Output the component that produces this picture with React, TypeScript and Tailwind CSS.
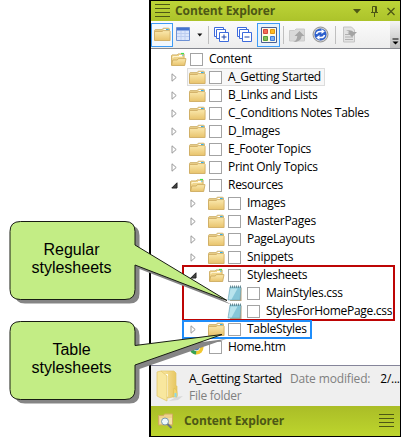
import React from "react";

function Folder({ open = false }: { open?: boolean }) {
  return (
    <svg width="17" height="15" viewBox="0 0 17 15" className="shrink-0">
      <defs>
        <linearGradient id="fold" x1="0" y1="0" x2="0" y2="1">
          <stop offset="0" stopColor="#fbe9ae" />
          <stop offset="1" stopColor="#e8c36c" />
        </linearGradient>
      </defs>
      {open ? (
        <>
          <path d="M1.500 13V3.500l.6-.6h5l1-1h6v5" fill="#f0d58c" stroke="#c9a656" strokeWidth=".8" />
          <path d="M9 3.500h4" stroke="#fff" strokeWidth="1.200" />
          <path d="M11 1.500h3" stroke="#3ee04a" strokeWidth="1.200" />
          <path d="M12 3.200h1.500" stroke="#46bdea" strokeWidth="1" />
          <path d="M3 6V4.500h9" fill="none" stroke="#fdf3cf" />
          <path d="M1.500 13.500 2.800 8h4.500l1-1.400H16L14.700 13.500Z" fill="url(#fold)" stroke="#c9a656" strokeWidth=".8" />
        </>
      ) : (
        <>
          <path d="M.5 13V3.200l.7-.7h7l1-1.300h5.600l.7.700V13Z" fill="#e6cb85" stroke="#cdb06a" strokeWidth=".8" />
          <path d="M9.500 2.700h5" stroke="#fff" strokeWidth="1.400" />
          <path d="M12 2.700h2.700" stroke="#36aee8" strokeWidth="1.400" />
          <path d="M.5 13.500V4.500h7.600l1.200-.9h6.200l.6.600v9.300Z" fill="url(#fold)" stroke="#cdaa60" strokeWidth=".8" />
        </>
      )}
    </svg>
  );
}

function Notepad() {
  return (
    <svg width="16" height="17" viewBox="0 0 16 17" className="shrink-0">
      <path d="M5 3h9.500v13H3Z" fill="#b9a27b" />
      <path d="M3 2h11l-1 13H1Z" fill="#86c6d8" stroke="#6ba3b5" strokeWidth=".6" />
      <path d="M3.500 3.500h7l-6 11H1.500Z" fill="#c6ebf2" opacity=".8" />
      <path d="M3.500.5v2.500M5.500.5v2.500M7.500.5v2.500M9.500.5v2.500M11.500.5v2.500M13.500.5v2.500" stroke="#5d848f" strokeWidth=".9" />
    </svg>
  );
}

function Chrome() {
  return (
    <svg width="15" height="15" viewBox="0 0 15 15" className="shrink-0">
      <circle cx="7.500" cy="7.500" r="7" fill="#f2c830" />
      <path d="M7.500 7.500 1.400 4A7 7 0 0 1 13.600 4Z" fill="#d53e32" />
      <path d="M7.500 7.500 1.400 4A7 7 0 0 0 7 14.500Z" fill="#33a254" />
      <circle cx="7.500" cy="7.500" r="3.500" fill="#eef4f8" />
      <circle cx="7.500" cy="7.500" r="2.700" fill="#3678c4" />
    </svg>
  );
}

type Item = {
  label: string;
  pad: string;
  icon: "closed" | "open" | "css" | "web";
  arrow?: "right" | "down";
  selected?: boolean;
};

const items: Item[] = [
  { label: "Content", pad: "pl-0", icon: "open" },
  { label: "A_Getting Started", pad: "pl-[19px]", icon: "closed", arrow: "right", selected: true },
  { label: "B_Links and Lists", pad: "pl-[19px]", icon: "closed", arrow: "right" },
  { label: "C_Conditions Notes Tables", pad: "pl-[19px]", icon: "closed", arrow: "right" },
  { label: "D_Images", pad: "pl-[19px]", icon: "closed", arrow: "right" },
  { label: "E_Footer Topics", pad: "pl-[19px]", icon: "closed", arrow: "right" },
  { label: "Print Only Topics", pad: "pl-[19px]", icon: "closed", arrow: "right" },
  { label: "Resources", pad: "pl-[19px]", icon: "open", arrow: "down" },
  { label: "Images", pad: "pl-[38px]", icon: "closed", arrow: "right" },
  { label: "MasterPages", pad: "pl-[38px]", icon: "closed", arrow: "right" },
  { label: "PageLayouts", pad: "pl-[38px]", icon: "closed", arrow: "right" },
  { label: "Snippets", pad: "pl-[38px]", icon: "closed", arrow: "right" },
  { label: "Stylesheets", pad: "pl-[38px]", icon: "open", arrow: "down" },
  { label: "MainStyles.css", pad: "pl-[57px]", icon: "css" },
  { label: "StylesForHomePage.css", pad: "pl-[57px]", icon: "css" },
  { label: "TableStyles", pad: "pl-[38px]", icon: "closed", arrow: "right" },
  { label: "Home.htm", pad: "pl-[19px]", icon: "web" },
];

function Row({ item }: { item: Item }) {
  return (
    <div className={"flex h-[18px] " + item.pad}>
      <div className="flex w-[17px] shrink-0 items-center pl-[1px] pt-[1px]">
        {item.arrow === "right" && (
          <svg width="7" height="9" viewBox="0 0 7 9"><path d="M1 .8v7.400L5.200 4.500Z" fill="#fff" stroke="#999" /></svg>
        )}
        {item.arrow === "down" && (
          <svg width="7" height="7" viewBox="0 0 7 7"><path d="M6 .8V6H.8Z" fill="#444" stroke="#222" /></svg>
        )}
      </div>
      <div className={"flex items-center border pl-[1px] pr-[3px] " + (item.selected ? "border-[#dcdcdc] bg-[#f7f7f7]" : "border-transparent")}>
        <div className="flex w-[20px] shrink-0">
          {item.icon === "css" ? <Notepad /> : item.icon === "web" ? <Chrome /> : <Folder open={item.icon === "open"} />}
        </div>
        <span className="mr-[6px] h-[13px] w-[13px] shrink-0 border border-[#a3a3a3] bg-white" />
        <span className="whitespace-nowrap text-[12px] leading-[16px] tracking-[-0.28px] text-black">{item.label}</span>
      </div>
    </div>
  );
}

function Stack({ minus = false }: { minus?: boolean }) {
  return (
    <svg width="16" height="16" viewBox="0 0 16 16" fill="#fff" stroke="#3d6bdc">
      <path d="M.5.5h9v9h-9Z" />
      <path d="M2.500 2.500h9v9h-9Z" />
      <path d="M5.500 5.500h9v9H5.500Z" />
      <path d={minus ? "M7.500 10h5" : "M7.500 10h5M10 7.500v5"} stroke="#1f45a9" />
    </svg>
  );
}

function Toolbar() {
  return (
    <div className="flex h-[28px] shrink-0 items-center border-b border-[#85878e] bg-gradient-to-b from-[#fbfbfb] to-[#ededed]">
      <div className="flex h-[24px] w-[22px] shrink-0 items-center justify-center border border-[#3d9bf5] bg-[#f3f8fd]"><Folder /></div>
      <svg className="ml-[3px] shrink-0" width="15" height="15" viewBox="0 0 15 15">
        <path d="M.5.500h13v13H.5Z" fill="#dbe6fb" stroke="#6d91d4" />
        <path d="M1 1h12v2.500H1Z" fill="#4674cf" />
        <path d="M1 6.500h12M1 9.500h12M5 4v9M9 4v9" stroke="#bccdf0" />
      </svg>
      <svg className="ml-[6px] shrink-0" width="6" height="4" viewBox="0 0 6 4"><path d="M.3.500h5L2.800 3.500Z" fill="#111" /></svg>
      <span className="ml-[5px] h-[18px] w-px shrink-0 bg-[#bfbfbf]" />
      <div className="ml-[5px] shrink-0"><Stack /></div>
      <div className="ml-[7px] shrink-0"><Stack minus /></div>
      <div className="ml-[4px] flex h-[24px] w-[23px] shrink-0 items-center justify-center border border-[#3d9bf5] bg-[#e6f2fc]">
        <svg width="16" height="16" viewBox="0 0 16 16">
          <path d="M.5.500h15v15H.5Z" fill="#fffbe5" stroke="#4a5f94" />
          <path d="M2.500 2.500h4v4h-4Z" fill="#f16b54" stroke="#d4453b" />
          <path d="M9.500 2.500h4v4h-4Z" fill="#ffbc20" stroke="#e5960f" />
          <path d="M2.500 9.500h4v4h-4Z" fill="#84bd54" stroke="#57a03d" />
          <path d="M9.500 9.500h4v4h-4Z" fill="#7eb1f4" stroke="#3e7bdb" />
        </svg>
      </div>
      <span className="ml-[3px] h-[18px] w-px shrink-0 bg-[#bfbfbf]" />
      <svg className="ml-[5px] shrink-0" width="17" height="16" viewBox="0 0 17 16">
        <path d="M.5 14V3.500h5L7 2h8.500v12Z" fill="#d9d9d9" stroke="#cacaca" />
        <path d="M4 15q4-1 4.300-6H5.500L10.500 4l5 5h-2.800Q12 15 4 15Z" fill="#a6a6a6" />
      </svg>
      <svg className="ml-[6px] shrink-0" width="17" height="17" viewBox="0 0 17 17">
        <circle cx="8.500" cy="8.500" r="7.500" fill="#d0d0d0" stroke="#939393" />
        <circle cx="8.500" cy="8.500" r="6" fill="#2c5fcd" />
        <path d="M4.500 8Q5 5.500 8 5.500h2M12.500 9Q12 11.500 9 11.500H7" fill="none" stroke="#fff" strokeWidth="1.500" />
        <path d="m9.500 3 3.300 2.500-3.300 2.500ZM7.500 9 4.200 11.500l3.300 2.500Z" fill="#fff" />
      </svg>
      <span className="ml-[6px] h-[18px] w-px shrink-0 bg-[#bfbfbf]" />
      <svg className="ml-[7px] shrink-0" width="15" height="17" viewBox="0 0 15 17">
        <path d="M.5 1h8l3 3v12H.5Z" fill="#e2e2e2" stroke="#c4c4c4" />
        <path d="M2 8.500h8M2 11h8M2 13.500h8" stroke="#b0b0b0" />
        <path d="M3 4.500q6-1 7.500 1.500H14L9 11 4.500 6.500h2Q6 5 3 4.500Z" fill="#a3a3a3" />
      </svg>
      <div className="ml-auto flex h-full w-[10px] flex-col items-center justify-end bg-gradient-to-b from-[#f5f5f5] to-[#bfbfbf] pb-[3px]">
        <svg width="7" height="7" viewBox="0 0 7 7"><path d="M.5 1h6" stroke="#000" /><path d="M.5 3.500h6L3.500 6.500Z" fill="#000" /></svg>
      </div>
    </div>
  );
}

function Grip() {
  return (
    <svg width="15" height="14" viewBox="0 0 15 14" className="shrink-0">
      <path d="M0 .5h15M0 4.500h15M0 8.500h15M0 12.500h15" stroke="#4d5715" />
    </svg>
  );
}

function LargeFolder() {
  return (
    <svg width="28" height="32" viewBox="0 0 28 32" className="shrink-0">
      <defs>
        <linearGradient id="large" x1="0" x2="1">
          <stop stopColor="#f9e8a5" /><stop offset="1" stopColor="#e7c55e" />
        </linearGradient>
      </defs>
      <path d="m20 27 7-1-5 4-9 1Z" fill="#d8d8d8" />
      <path d="M5 1h13l2 2v13h1v10l-9 2-7-2Z" fill="url(#large)" stroke="#e1c569" strokeWidth=".7" />
      <path d="M8 4h4v23l-4-2Z" fill="#fffde9" />
      <path d="M1 2 5 1l6 5v25L1 26Z" fill="#f8e79e" stroke="#dfc364" strokeWidth=".7" />
      <path d="M18 18q4 2 3 9h-4Z" fill="#f4d770" stroke="#d7b84e" strokeWidth=".5" />
      <path d="M19.500 23v4" stroke="#8bd7e8" strokeWidth="2" />
    </svg>
  );
}

function Callouts() {
  return (
    <div className="pointer-events-none absolute inset-0">
      <svg width="401" height="437" viewBox="0 0 401 437">
        <g fill="#858585">
          <path d="M25 225.500H129.500Q139.500 225.500 139.500 235.500V249L231 304.500 139.500 269V293.500Q139.500 303.500 129.500 303.500H25Q15 303.500 15 293.500V235.500Q15 225.500 25 225.500Z" />
          <path d="M25 325.500H129.500Q139.500 325.500 139.500 335.500V350L226 339 139.500 369V393.500Q139.500 403.500 129.500 403.500H25Q15 403.500 15 393.500V335.500Q15 325.500 25 325.500Z" />
        </g>
        <g fill="#c3ed85" stroke="#181c13">
          <path d="M20.500 221.500H125Q135 221.500 135 231.500V245L227 300.500 135 265V289.500Q135 299.500 125 299.500H20.500Q10 299.500 10 289.500V231.500Q10 221.500 20.500 221.500Z" />
          <path d="M20.500 321.500H125Q135 321.500 135 331.500V345.500L222 334.500 135 365V389.500Q135 399.500 125 399.500H20.500Q10 399.500 10 389.500V331.500Q10 321.500 20.500 321.500Z" />
        </g>
      </svg>
      <div className="absolute left-[9px] top-[241px] w-[125px] text-center font-['Liberation_Sans',sans-serif] text-[16px] leading-[18px] text-black">Regular<br />stylesheets</div>
      <div className="absolute left-[9px] top-[341px] w-[125px] text-center font-['Liberation_Sans',sans-serif] text-[16px] leading-[18px] text-black">Table<br />stylesheets</div>
    </div>
  );
}

export default function App() {
  return (
    <main className="relative flex h-[437px] w-[401px] justify-end overflow-hidden bg-white font-['Open_Sans','Noto_Sans',sans-serif]">
      <section className="flex h-[437px] w-[252px] flex-col border border-l-2 border-black bg-white">
        <header className="flex h-[20px] shrink-0 items-center bg-gradient-to-b from-[#bdd438] to-[#acc32a] pl-[4px] pr-[4px] text-[#4d5715]">
          <Grip />
          <h1 className="ml-[5px] whitespace-nowrap text-[12px] font-bold leading-[18px] tracking-[-0.1px]">Content Explorer</h1>
          <svg className="ml-auto" width="44" height="13" viewBox="0 0 44 13" fill="none" stroke="#4d5715">
            <path d="M1 4h8L5 8.500Z" fill="#4d5715" stroke="none" />
            <path d="M20.500 1.500h4v6h-4ZM23.500 2v5M19 7.500h7M22.500 8v4" />
            <path d="m35.500 3 7 7m0-7-7 7" strokeWidth="1.300" />
          </svg>
        </header>
        <Toolbar />
        <div className="relative h-[316px] shrink-0 pt-[1px]">
          {items.map((item) => <Row key={item.label} item={item} />)}
          <div className="absolute left-[31px] top-[216px] h-[56px] w-[213px] border-2 border-[#bd0505]" />
          <div className="absolute left-[31px] top-[271px] h-[19px] w-[130px] border-2 border-[#1f8dfa]" />
        </div>
        <div className="flex h-[41px] shrink-0 border-t border-[#85859a] bg-[#efefef] pl-[5px] pt-[4px] text-[12px] leading-[17px] tracking-[-0.28px] text-[#808080]">
          <LargeFolder />
          <div className="ml-[5px] min-w-0 flex-1">
            <div className="flex whitespace-nowrap"><span className="text-black">A_Getting Started</span><span className="ml-[8px] tracking-[-0.15px]">Date modified:</span><span className="ml-[10px] text-black">2/...</span></div>
            <div>File folder</div>
          </div>
        </div>
        <footer className="flex min-h-0 flex-1 items-center bg-gradient-to-b from-[#aabd27] to-[#bdd52d] pl-[7px] pr-[6px] text-[#4d5715]">
          <svg width="16" height="16" viewBox="0 0 16 16" className="shrink-0">
            <path d="M.5 12V2.500h5l1-1.500h8V12Z" fill="#efd28c" stroke="#d0ac60" />
            <path d="M2 5h12v6H2Z" fill="#f5e0a5" />
            <circle cx="7" cy="8.500" r="3.500" fill="#edf8fb" stroke="#799aad" />
            <path d="m9.500 11 4 4" stroke="#6a7584" strokeWidth="2" />
          </svg>
          <span className="ml-[10px] whitespace-nowrap text-[12px] font-bold tracking-[-0.1px]">Content Explorer</span>
          <div className="ml-auto flex"><Grip /></div>
        </footer>
      </section>
      <Callouts />
    </main>
  );
}
